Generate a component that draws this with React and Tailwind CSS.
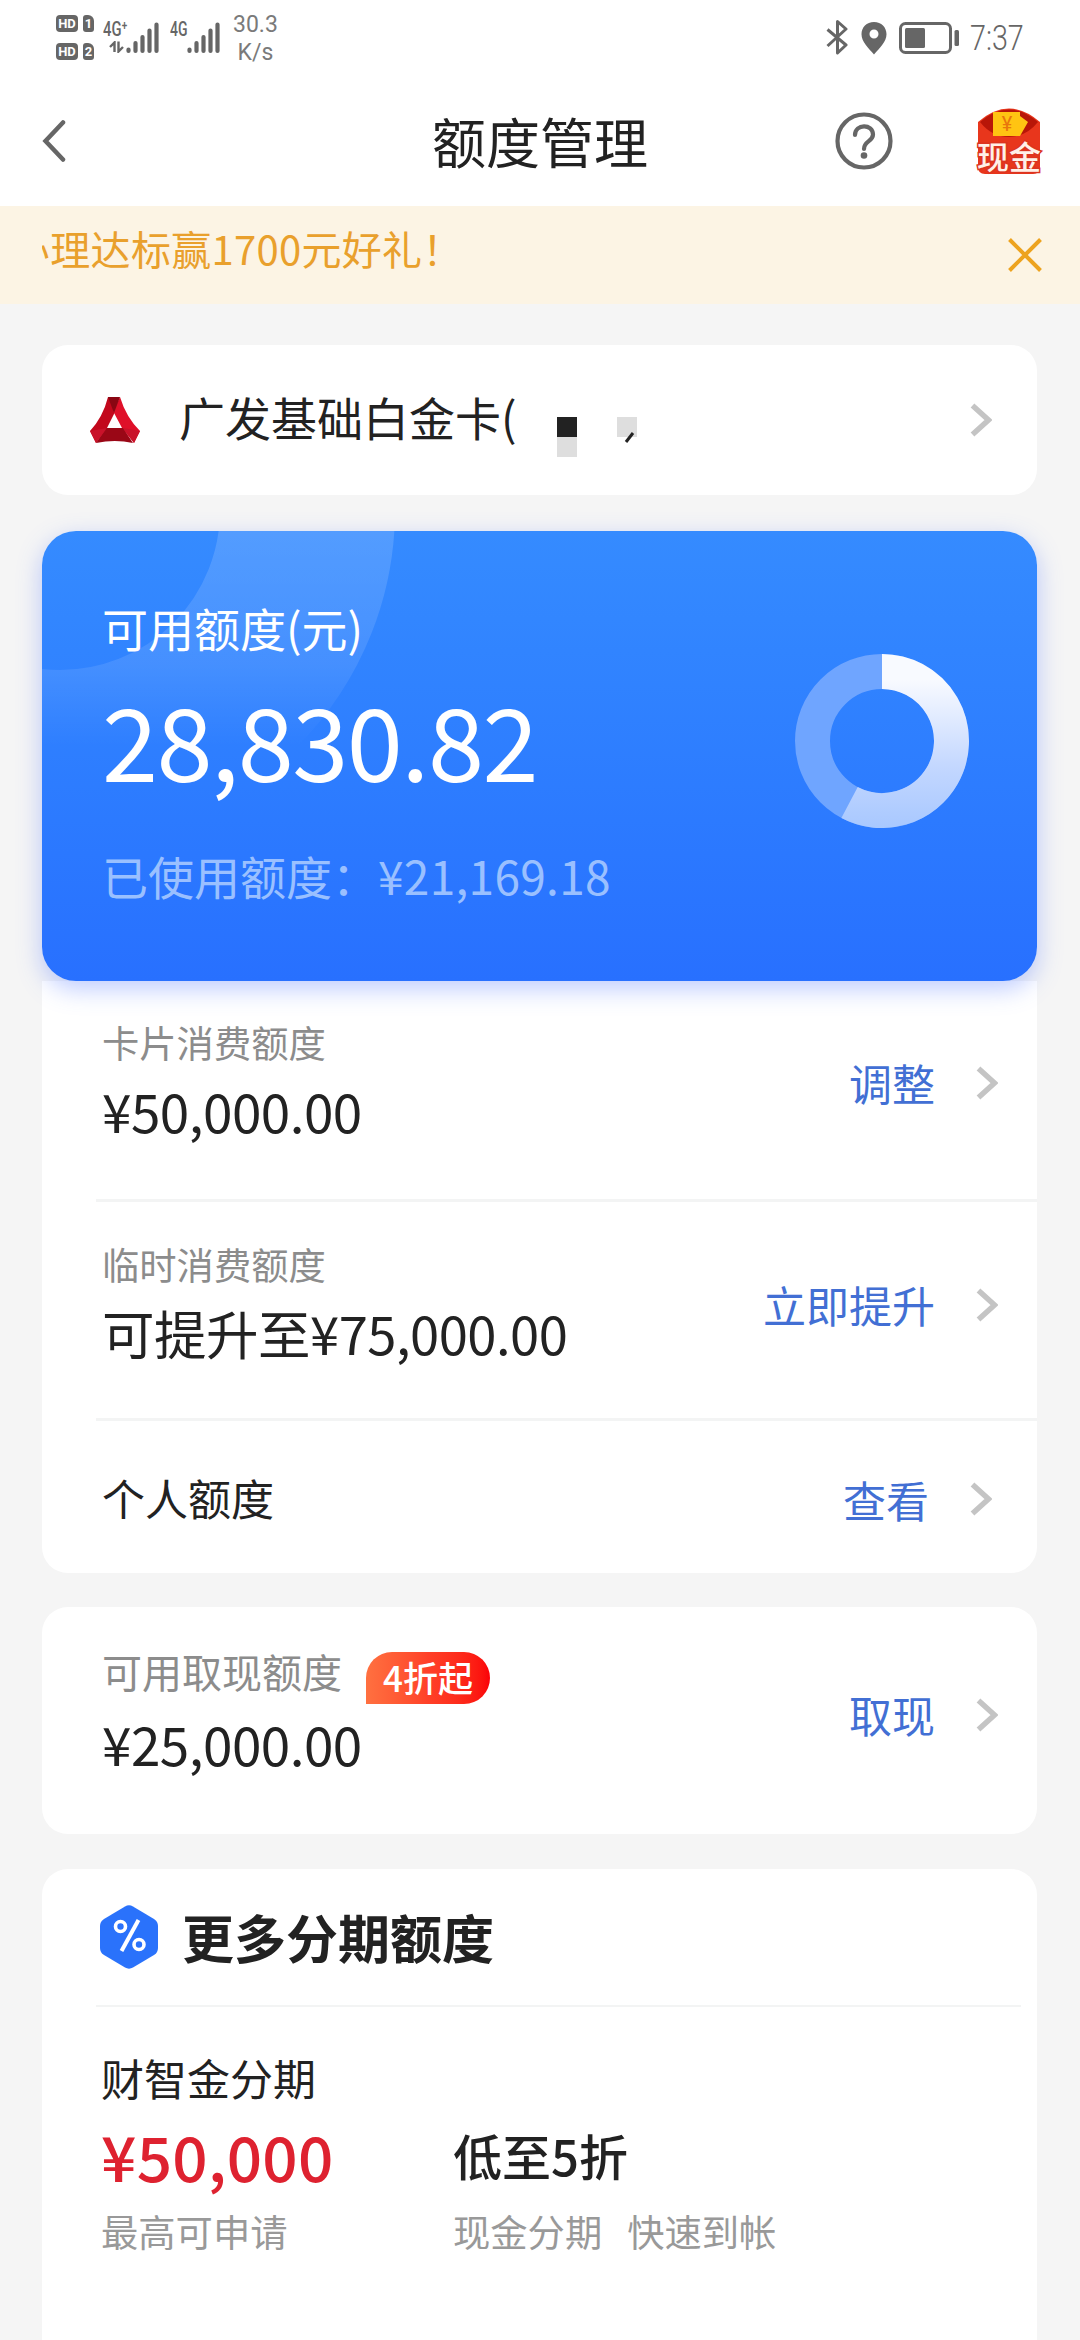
import clsx from "clsx";

const RING = 2 * Math.PI * 69.5;

const usage = { available: 28830.82, total: 50000 };

function Chevron({ className }) {
    return (
        <svg viewBox="0 0 22 34" className={clsx("w-[22px] h-[34px] shrink-0", className)} fill="none">
            <path d="M2.5 2.5 L18.5 17 L2.5 31.5" stroke="#c4c4c4" strokeWidth="5.5" />
        </svg>
    );
}

function HdBadge({ sim }) {
    return (
        <div className="flex gap-[5px]">
            <span className="flex h-[17px] w-[22px] items-center justify-center rounded-[4px] bg-[#666] text-[13px] leading-none font-bold text-white">HD</span>
            <span className="flex h-[17px] w-[11px] items-center justify-center rounded-[3px] rounded-tr-[6px] bg-[#666] text-[13px] leading-none font-bold text-white">{sim}</span>
        </div>
    );
}

function Signal() {
    return (
        <svg viewBox="0 0 33 32" className="h-8 w-[33px]" fill="none" stroke="#666" strokeWidth="4.2" strokeLinecap="round">
            <path d="M2.5 29V27.5 M9.5 29V21 M16.5 29V15 M23.5 29V8.5 M30.5 29V2.5" />
        </svg>
    );
}

function StatusBar() {
    return (
        <div className="flex h-[76px] items-start pl-14 text-[#666]" style={{ fontFamily: "Roboto, sans-serif" }}>
            <div className="mt-[15px] flex flex-col gap-[11px]">
                <HdBadge sim="1" />
                <HdBadge sim="2" />
            </div>
            <div className="mt-[21px] ml-[9px] w-6 shrink-0">
                <div className="flex text-[20px] leading-[16px] font-medium">
                    <span className="inline-block origin-left scale-x-[0.74]">4G⁺</span>
                </div>
                <svg viewBox="0 0 16 12" className="mt-1 ml-[6px] h-3 w-4" fill="none" stroke="#666" strokeWidth="2.4">
                    <path d="M1 6 L5.5 1.5 V11 M9.5 0.5 V10.5 L14 6" />
                </svg>
            </div>
            <div className="mt-[22px] -ml-px">
                <Signal />
            </div>
            <div className="mt-[21px] ml-[11px] w-[18px] text-[20px] leading-[16px] font-medium">
                <span className="inline-block origin-left scale-x-[0.7]">4G</span>
            </div>
            <div className="mt-[22px] -ml-px">
                <Signal />
            </div>
            <div className="mt-[11px] ml-[13px] text-center text-[23px] leading-[28px] text-[#7a7a7a]">
                <div>30.3</div>
                <div>K/s</div>
            </div>
            <div className="mt-[19px] mr-[56px] ml-auto flex items-start">
                <svg viewBox="0 0 22 36" className="h-9 w-[22px]" fill="none" stroke="#666" strokeWidth="3" strokeLinejoin="round">
                    <path d="M1.5 10.5 L20 26 L11.5 34 V2.5 L20 10 L1.5 27" />
                </svg>
                <svg viewBox="0 0 26 33" className="mt-[3px] ml-[13px] h-[33px] w-[26px]">
                    <path fill="#666" fillRule="evenodd" d="M13 0C5.6 0 .5 5.3.5 12.3.5 20 7.5 26 13 32.5 18.500 26 25.500 20 25.500 12.300 25.500 5.300 20.400 0 13 0ZM13 7.500a4.500 4.500 0 1 1 0 9 4.500 4.500 0 0 1 0-9Z" />
                </svg>
                <svg viewBox="0 0 62 32" className="mt-[3px] ml-3 h-8 w-[62px]">
                    <rect x="1.500" y="1.500" width="50" height="29" rx="5" fill="none" stroke="#666" strokeWidth="3" />
                    <rect x="6" y="6" width="20" height="20" rx="1.500" fill="#666" />
                    <rect x="55.500" y="8" width="4.500" height="16" rx="1.500" fill="#666" />
                </svg>
                <span className="ml-[9px] w-[54px] text-[35px] leading-[39px] font-light">
                    <span className="inline-block origin-left scale-x-[0.82]">7:37</span>
                </span>
            </div>
        </div>
    );
}

function RedPacket() {
    return (
        <svg viewBox="0 0 66 68" className="h-[68px] w-[66px] overflow-visible">
            <path fill="#e8361c" d="M2 15 Q33 -12 64 15 V60 Q64 67 57 67 H9 Q2 67 2 60Z" />
            <path fill="#b81608" d="M4 15 Q33 -10 62 15 Q50 30 33 30 Q16 30 4 15Z" />
            <path fill="#ffc412" d="M17 5 H44 V9 L52 15 L44 29 H17Z" />
            <text x="31" y="24" textAnchor="middle" fontSize="20" fontFamily="Roboto, sans-serif" fill="#e8760c">¥</text>
            <text x="33" y="62" textAnchor="middle" fontSize="32" fontWeight="500" fontFamily="'Noto Sans CJK SC', sans-serif" fill="#fff0e8" stroke="#dc3420" strokeWidth="3" paintOrder="stroke">现金</text>
        </svg>
    );
}

function Header() {
    return (
        <header className="grid h-[130px] grid-cols-3 items-center bg-white">
            <svg viewBox="0 0 24 42" className="ml-[42px] h-[42px] w-6" fill="none">
                <path d="M21 2.500 L3.500 21 L21 39.500" stroke="#666" strokeWidth="4.500" strokeLinecap="round" />
            </svg>
            <h1 className="text-center text-[54px] leading-none text-[#222]">额度管理</h1>
            <div className="flex items-center justify-end gap-[83px] pr-[38px]">
                <svg viewBox="0 0 58 58" className="h-[58px] w-[58px]" fill="none" stroke="#666" strokeWidth="4.200">
                    <circle cx="29" cy="29" r="26.500" />
                    <path d="M20 23 C20 11.500 38 11.500 38 22.500 C38 29.500 29 29 29 37" strokeLinecap="round" />
                    <circle cx="29" cy="43.500" r="3.300" fill="#666" stroke="none" />
                </svg>
                <RedPacket />
            </div>
        </header>
    );
}

function Notice() {
    return (
        <div className="flex h-[98px] items-center justify-between bg-[#fcf4e4] pr-[38px] pl-[42px]">
            <div className="mb-3.5 flex w-[600px] overflow-hidden">
                <p className="-ml-8 text-[40px] leading-[48px] tracking-[0.3px] whitespace-nowrap text-[#e9a02c]">办理达标赢1700元好礼！</p>
            </div>
            <svg viewBox="0 0 34 34" className="h-[34px] w-[34px]" fill="none" stroke="#eda31f" strokeWidth="4">
                <path d="M1.500 1.500 L32.500 32.500 M32.500 1.500 L1.500 32.500" />
            </svg>
        </div>
    );
}

function BankLogo() {
    return (
        <svg viewBox="0 0 50 46" className="h-[46px] w-[50px] shrink-0">
            <path fill="#c2081c" d="M18 0 H24 L27 11 L17 31 L6 46 L0 34 Q13 20 18 0Z" />
            <path fill="#df1029" d="M30 0 Q36 20 50 34 L44 46 L32 31 L23 14 Z" />
            <path fill="#8a0612" d="M18 0 H30 L24 16 Z" />
            <path fill="#9a0716" d="M16 31 H33 L43 46 Q25 42 6 46 Z" />
            <path fill="#c9122a" d="M0 34 L17 31 L6 46Z M50 34 L33 31 L44 46Z" />
            <path fill="#fff" d="M24.500 19 L30 31 H19 Z" />
        </svg>
    );
}

function CardPicker() {
    return (
        <section className="mt-[41px] flex h-[150px] items-center rounded-[26px] bg-white pr-[45px] pl-12">
            <BankLogo />
            <span className="mb-2 ml-[39px] text-[46px] leading-none text-[#222]">广发基础白金卡(</span>
            {/* masked card number */}
            <div className="mt-[34px] ml-[40px] flex h-10 items-start">
                <div>
                    <div className="h-5 w-5 bg-[#222]" />
                    <div className="h-5 w-5 bg-[#dedede]" />
                </div>
                <svg viewBox="0 0 20 26" className="ml-[40px] h-[26px] w-5">
                    <rect width="20" height="20" fill="#dedede" />
                    <path d="M16 16 L9 25" stroke="#222" strokeWidth="3" />
                </svg>
            </div>
            <Chevron className="ml-auto" />
        </section>
    );
}

function UsageRing() {
    const used = (usage.available / usage.total) * RING;
    return (
        <svg viewBox="0 0 174 174" className="h-[174px] w-[174px]" fill="none" strokeWidth="35">
            <defs>
                <linearGradient id="ring" x1="0" y1="0" x2="0" y2="174" gradientUnits="userSpaceOnUse">
                    <stop offset="0.15" stopColor="#f8faff" />
                    <stop offset="0.65" stopColor="#c3d7ff" />
                    <stop offset="1" stopColor="#a8c8ff" />
                </linearGradient>
            </defs>
            <circle cx="87" cy="87" r="69.500" stroke="#6fa5ff" />
            <path d="M87 17.500 A69.500 69.500 0 1 1 86.990 17.500" stroke="url(#ring)" strokeDasharray={`${used} ${RING}`} />
        </svg>
    );
}

function LimitCard() {
    return (
        <section className="relative z-10 mt-9 flex h-[450px] justify-between overflow-hidden rounded-[34px] bg-linear-to-b from-[#358bff] to-[#2870ff] pr-[68px] pl-[60px] shadow-[0_8px_24px_rgba(70,110,255,0.35)]">
            <svg viewBox="0 0 400 450" className="absolute top-0 left-0 h-[450px] w-[400px]">
                <defs>
                    <linearGradient id="halo" x1="0" y1="0" x2="0" y2="215" gradientUnits="userSpaceOnUse">
                        <stop offset="0" stopColor="#fff" stopOpacity="0.150" />
                        <stop offset="0.620" stopColor="#fff" stopOpacity="0.100" />
                        <stop offset="1" stopColor="#fff" stopOpacity="0" />
                    </linearGradient>
                </defs>
                <circle cx="18" cy="-21" r="247.500" fill="none" stroke="url(#halo)" strokeWidth="175" />
            </svg>
            <div className="relative text-white">
                <p className="mt-[72px] text-[46px] leading-[48px]">可用额度(元)</p>
                <p className="mt-[37px] text-[101px] leading-[100px] tracking-[-1.5px]">28,830.82</p>
                <p className="mt-[63px] text-[46px] leading-[48px] whitespace-nowrap text-[#9ac0ff]">
                    已使用额度：<span className="tracking-[0.3px]">¥21,169.18</span>
                </p>
            </div>
            <div className="relative mt-[123px]">
                <UsageRing />
            </div>
        </section>
    );
}

function Action({ label }) {
    return (
        <div className="flex items-center gap-[41px] text-[#426fd4]">
            <span className="text-[43px] leading-none">{label}</span>
            <Chevron />
        </div>
    );
}

function Amounts() {
    return (
        <section className="rounded-b-[26px] bg-white pl-[54px]">
            <div className="flex h-[221px] justify-between border-b-[3px] border-[#f3f4f4] pt-[39px] pr-[39px] pl-[6px]">
                <div>
                    <p className="text-[37.300px] leading-[44px] text-[#8c8c8c]">卡片消费额度</p>
                    <p className="mt-[17px] text-[53px] leading-[58px] tracking-[-0.5px] text-[#222]">¥50,000.00</p>
                </div>
                <div className="mt-[41px]">
                    <Action label="调整" />
                </div>
            </div>
            <div className="flex h-[219px] justify-between border-b-[3px] border-[#f3f4f4] pt-[40px] pr-[39px] pl-[6px]">
                <div>
                    <p className="text-[37.300px] leading-[44px] text-[#8c8c8c]">临时消费额度</p>
                    <p className="mt-[17px] text-[52.500px] leading-[58px] tracking-[-0.500px] text-[#222]">可提升至¥75,000.00</p>
                </div>
                <div className="mt-[41px]">
                    <Action label="立即提升" />
                </div>
            </div>
            <div className="flex h-[152px] items-center justify-between pr-[45px] pl-[6px]">
                <p className="text-[43px] leading-none text-[#222]">个人额度</p>
                <div className="mt-1">
                    <Action label="查看" />
                </div>
            </div>
        </section>
    );
}

function CashCard() {
    return (
        <section className="mt-[34px] flex h-[227px] justify-between rounded-[26px] bg-white pt-10 pr-[39px] pl-[60px]">
            <div>
                <div className="flex h-12 items-start">
                    <p className="text-[40px] leading-[48px] text-[#8c8c8c]">可用取现额度</p>
                    <span className="mt-[5px] ml-[24px] flex h-[52px] w-[124px] items-center justify-center rounded-[26px] rounded-bl-none bg-linear-to-r from-[#ff7040] via-[#ff4028] to-[#fb0008] pb-1 text-[35px] leading-none font-medium text-white">4折起</span>
                </div>
                <p className="mt-[19px] text-[53px] leading-[58px] tracking-[-0.500px] text-[#222]">¥25,000.00</p>
            </div>
            <div className="mt-[46px]">
                <Action label="取现" />
            </div>
        </section>
    );
}

function MoreCard() {
    return (
        <section className="mt-[35px] h-[520px] rounded-t-[26px] bg-white pl-[54px]">
            <div className="mr-4 flex h-[138px] items-center border-b-2 border-[#f3f4f4] pl-1">
                <svg viewBox="0 0 58 64" className="h-16 w-[58px]">
                    <path fill="#2a72fb" d="M25 1.500 Q29 -0.800 33 1.500 L54 14 Q58 16.500 58 21 V43 Q58 47.500 54 50 L33 62.500 Q29 64.800 25 62.500 L4 50 Q0 47.500 0 43 V21 Q0 16.500 4 14Z" />
                    <g fill="none" stroke="#fff" strokeWidth="3.600">
                        <circle cx="20.500" cy="21.500" r="5" />
                        <circle cx="39" cy="39.500" r="5" />
                        <path d="M38.500 15 L21.500 46" strokeWidth="4" />
                    </g>
                </svg>
                <h2 className="ml-[24px] text-[52px] leading-none font-bold text-[#222]">更多分期额度</h2>
            </div>
            <p className="mt-[44px] pl-[5px] text-[43px] leading-[52px] text-[#222]">财智金分期</p>
            <div className="grid grid-cols-[352px_1fr] pl-[5px]">
                <p className="mt-4 text-[62px] leading-[72px] font-medium tracking-[0.300px] text-[#de2230]">¥50,000</p>
                <p className="mt-4 text-[49px] leading-[72px] font-medium text-[#222]">低至5折</p>
                <p className="mt-[18px] text-[37.300px] leading-[44px] text-[#999]">最高可申请</p>
                <p className="mt-[18px] flex gap-[25px] text-[37.300px] leading-[44px] text-[#999]">
                    <span>现金分期</span>
                    <span>快速到帐</span>
                </p>
            </div>
        </section>
    );
}

export default function App() {
    return (
        <div className="h-[2340px] w-[1080px] overflow-hidden bg-[#f5f5f5]" style={{ fontFamily: '"Noto Sans CJK SC", sans-serif' }}>
            <div className="bg-white">
                <StatusBar />
                <Header />
            </div>
            <Notice />
            <main className="mr-[43px] ml-[42px]">
                <CardPicker />
                <LimitCard />
                <Amounts />
                <CashCard />
                <MoreCard />
            </main>
        </div>
    );
}
